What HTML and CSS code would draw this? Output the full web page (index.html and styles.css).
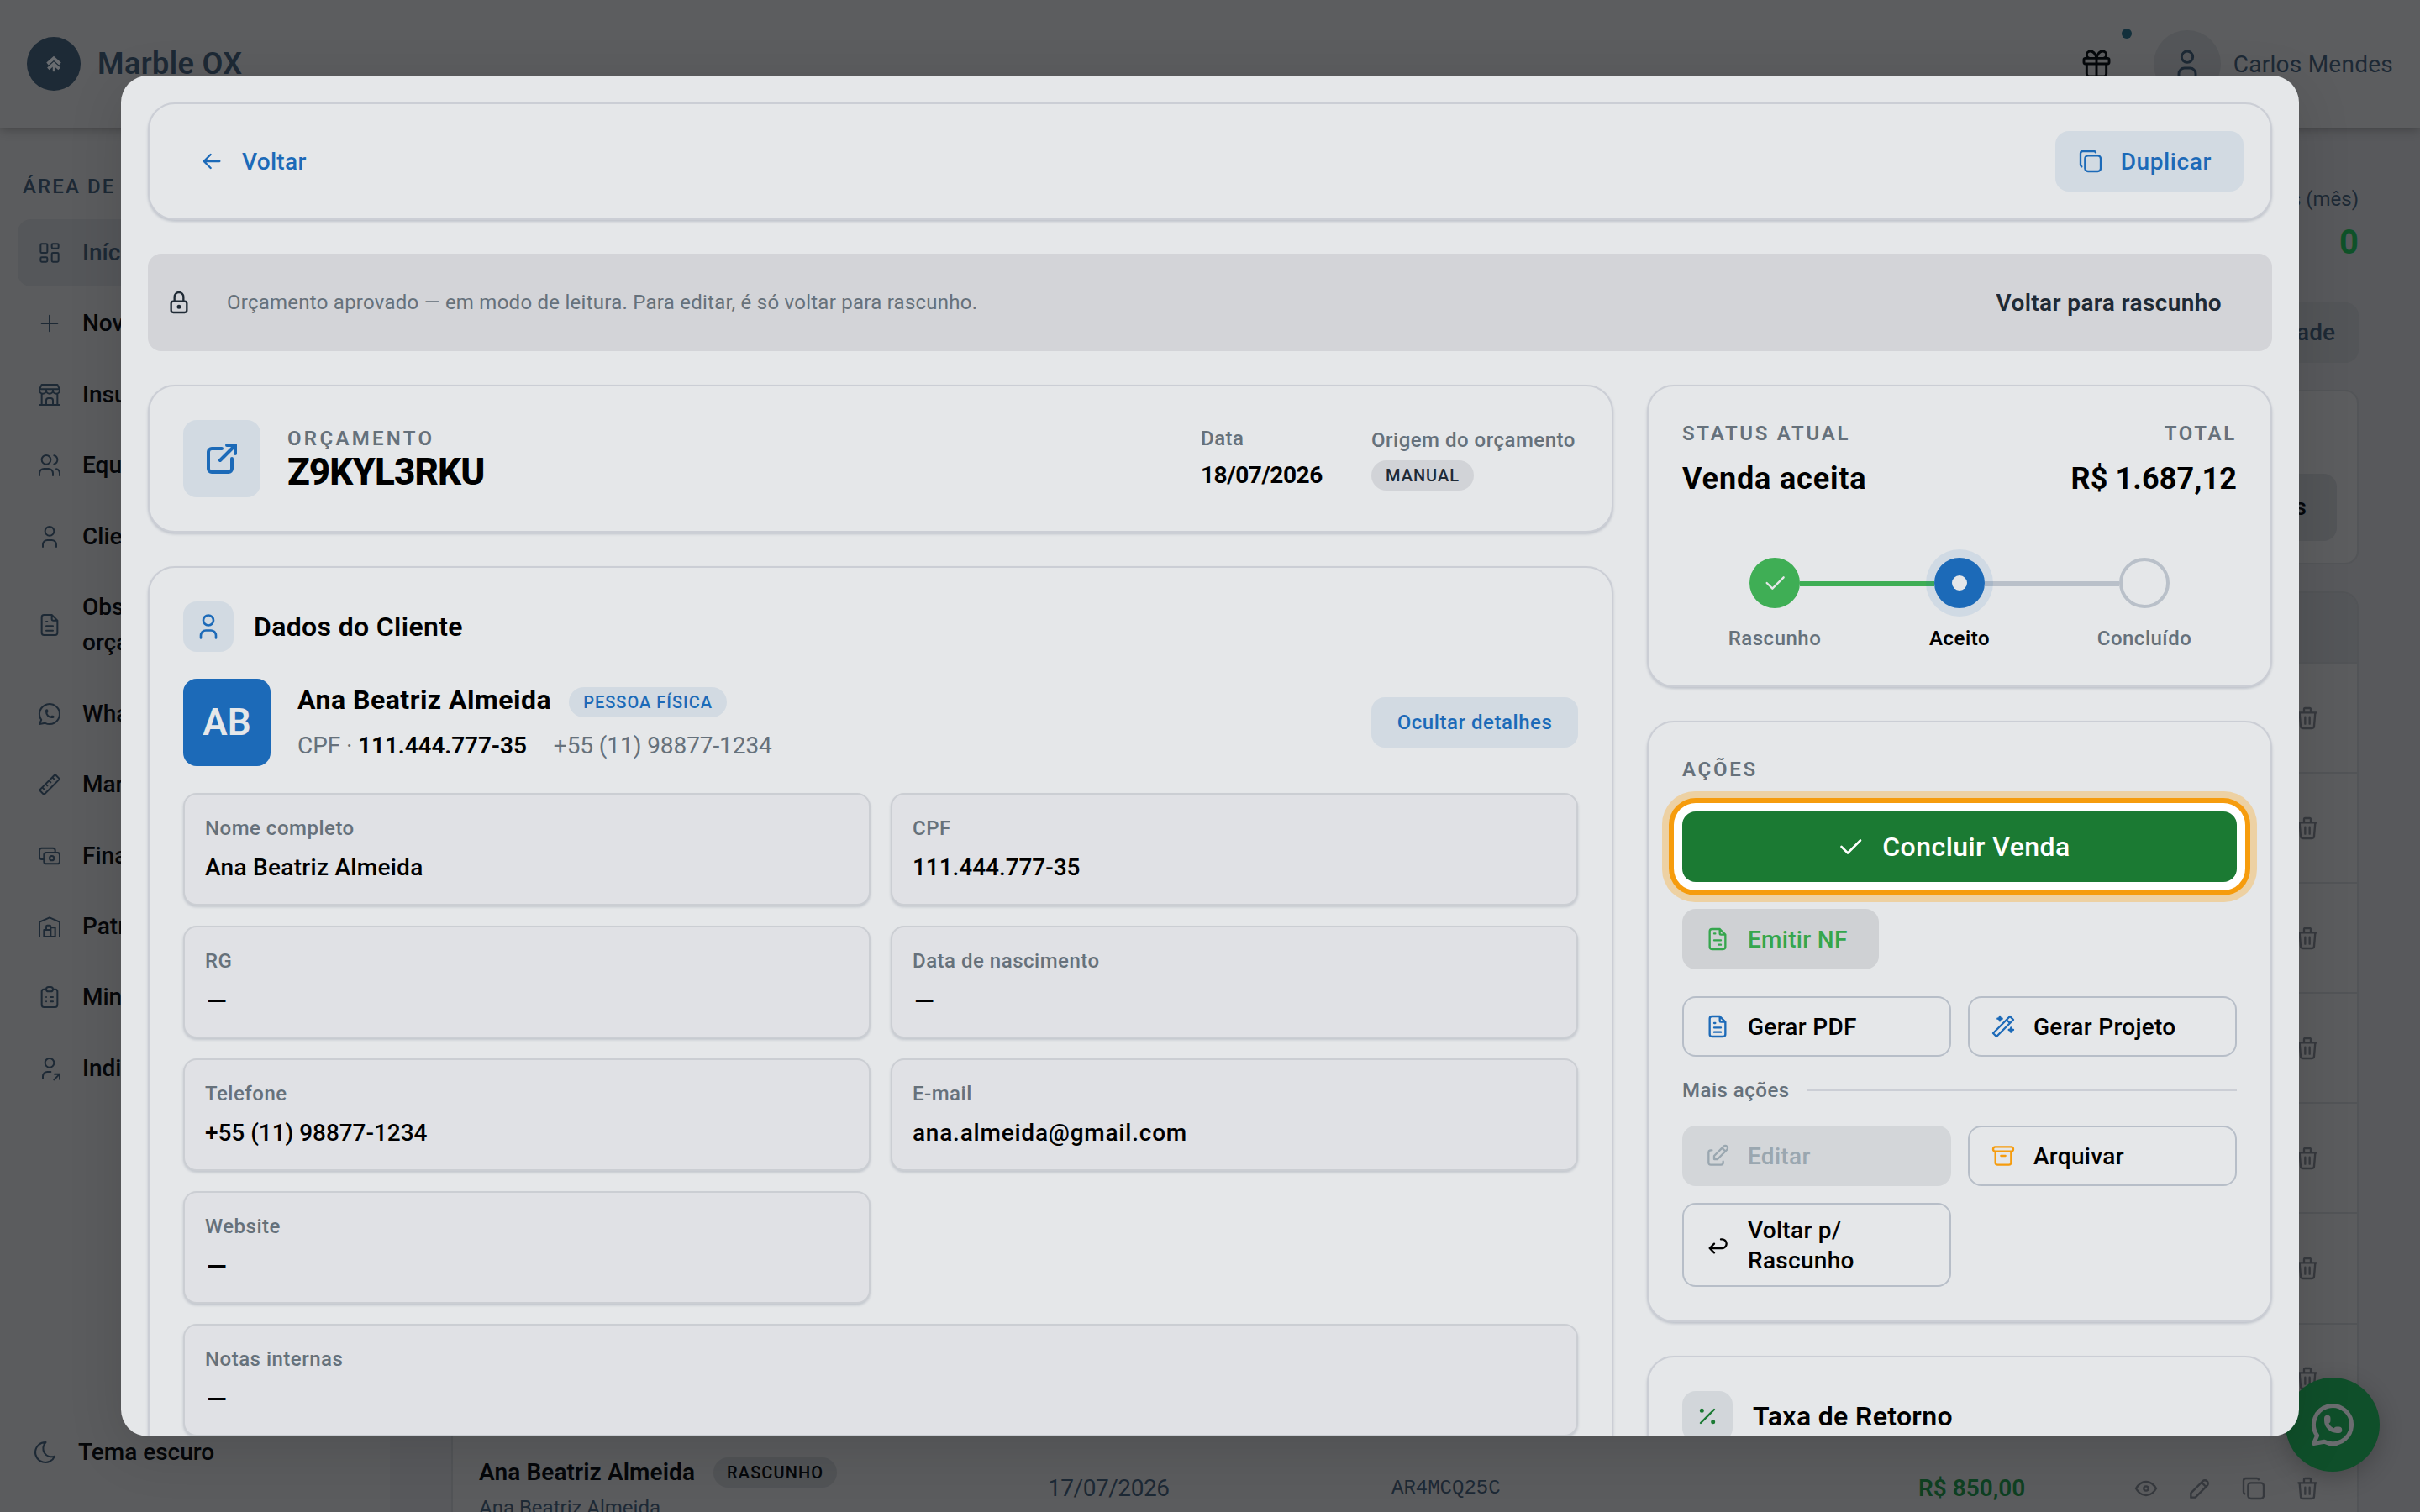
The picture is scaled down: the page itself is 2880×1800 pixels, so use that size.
FILE: index.html
```html
<!DOCTYPE html>
<html lang="pt-BR">
<head>
<meta charset="utf-8">
<title>Marble OX</title>
<link rel="stylesheet" href="styles.css">
</head>
<body>
<svg class="sprite" aria-hidden="true">
  <symbol id="arrow-left" viewBox="0 0 24 24"><path d="M5 12h14M5 12l6 6M5 12l6-6"/></symbol>
  <symbol id="copy" viewBox="0 0 24 24"><path d="M7 9.667A2.667 2.667 0 0 1 9.667 7h8.666A2.667 2.667 0 0 1 21 9.667v8.666A2.667 2.667 0 0 1 18.333 21H9.667A2.667 2.667 0 0 1 7 18.333z"/><path d="M4.012 16.737A2.005 2.005 0 0 1 3 15V5c0-1.1.9-2 2-2h10c.75 0 1.158.385 1.5 1"/></symbol>
  <symbol id="lock" viewBox="0 0 24 24"><path d="M5 13a2 2 0 0 1 2-2h10a2 2 0 0 1 2 2v6a2 2 0 0 1-2 2H7a2 2 0 0 1-2-2zM11 16a1 1 0 1 0 2 0a1 1 0 0 0-2 0M8 11V7a4 4 0 1 1 8 0v4"/></symbol>
  <symbol id="external" viewBox="0 0 24 24"><path d="M12 6H6a2 2 0 0 0-2 2v10a2 2 0 0 0 2 2h10a2 2 0 0 0 2-2v-6M11 13l9-9M15 4h5v5"/></symbol>
  <symbol id="user" viewBox="0 0 24 24"><path d="M8 7a4 4 0 1 0 8 0a4 4 0 0 0-8 0M6 21v-2a4 4 0 0 1 4-4h4a4 4 0 0 1 4 4v2"/></symbol>
  <symbol id="check" viewBox="0 0 24 24"><path d="M5 12l5 5L20 7"/></symbol>
  <symbol id="invoice" viewBox="0 0 24 24"><path d="M14 3v4a1 1 0 0 0 1 1h4M17 21H7a2 2 0 0 1-2-2V5a2 2 0 0 1 2-2h7l5 5v11a2 2 0 0 1-2 2zM9 7h1M9 13h6M13 17h2"/></symbol>
  <symbol id="file" viewBox="0 0 24 24"><path d="M14 3v4a1 1 0 0 0 1 1h4M17 21H7a2 2 0 0 1-2-2V5a2 2 0 0 1 2-2h7l5 5v11a2 2 0 0 1-2 2zM9 9h1M9 13h6M9 17h6"/></symbol>
  <symbol id="wand" viewBox="0 0 24 24"><path d="M6 21L21 6l-3-3L3 18l3 3M15 6l3 3M9 3a2 2 0 0 0 2 2a2 2 0 0 0-2 2a2 2 0 0 0-2-2a2 2 0 0 0 2-2M19 13a2 2 0 0 0 2 2a2 2 0 0 0-2 2a2 2 0 0 0-2-2a2 2 0 0 0 2-2"/></symbol>
  <symbol id="edit" viewBox="0 0 24 24"><path d="M7 7H6a2 2 0 0 0-2 2v9a2 2 0 0 0 2 2h9a2 2 0 0 0 2-2v-1"/><path d="M20.385 6.585a2.1 2.1 0 0 0-2.97-2.97L9 12v3h3zM16 5l3 3"/></symbol>
  <symbol id="archive" viewBox="0 0 24 24"><path d="M3 6a2 2 0 0 1 2-2h14a2 2 0 0 1 0 4H5a2 2 0 0 1-2-2zM5 8v10a2 2 0 0 0 2 2h10a2 2 0 0 0 2-2V8M10 12h4"/></symbol>
  <symbol id="back" viewBox="0 0 24 24"><path d="M9 11l-4 4l4 4m-4-4h11a4 4 0 0 0 0-8h-1"/></symbol>
  <symbol id="percent" viewBox="0 0 24 24"><path d="M16 17a1 1 0 1 0 2 0a1 1 0 0 0-2 0M6 7a1 1 0 1 0 2 0a1 1 0 0 0-2 0M6 18L18 6"/></symbol>
  <symbol id="trash" viewBox="0 0 24 24"><path d="M4 7h16M10 11v6M14 11v6M5 7l1 12a2 2 0 0 0 2 2h8a2 2 0 0 0 2-2l1-12M9 7V4a1 1 0 0 1 1-1h4a1 1 0 0 1 1 1v3"/></symbol>
  <symbol id="eye" viewBox="0 0 24 24"><path d="M10 12a2 2 0 1 0 4 0a2 2 0 0 0-4 0M21 12c-2.4 4-5.4 6-9 6s-6.600-2-9-6c2.400-4 5.400-6 9-6s6.600 2 9 6"/></symbol>
  <symbol id="pencil" viewBox="0 0 24 24"><path d="M4 20h4L18.500 9.500a2.828 2.828 0 1 0-4-4L4 16v4M13.500 6.500l4 4"/></symbol>
  <symbol id="gift" viewBox="0 0 24 24"><path d="M3 9a1 1 0 0 1 1-1h16a1 1 0 0 1 1 1v2a1 1 0 0 1-1 1H4a1 1 0 0 1-1-1zM12 8v13M19 12v7a2 2 0 0 1-2 2H7a2 2 0 0 1-2-2v-7M7.500 8a2.500 2.500 0 0 1 0-5A4.800 8 0 0 1 12 8a4.800 8 0 0 1 4.500-5a2.500 2.500 0 0 1 0 5"/></symbol>
  <symbol id="dashboard" viewBox="0 0 24 24"><path d="M5 4h4a1 1 0 0 1 1 1v6a1 1 0 0 1-1 1H5a1 1 0 0 1-1-1V5a1 1 0 0 1 1-1M5 16h4a1 1 0 0 1 1 1v2a1 1 0 0 1-1 1H5a1 1 0 0 1-1-1v-2a1 1 0 0 1 1-1M15 12h4a1 1 0 0 1 1 1v6a1 1 0 0 1-1 1h-4a1 1 0 0 1-1-1v-6a1 1 0 0 1 1-1M15 4h4a1 1 0 0 1 1 1v2a1 1 0 0 1-1 1h-4a1 1 0 0 1-1-1V5a1 1 0 0 1 1-1"/></symbol>
  <symbol id="plus" viewBox="0 0 24 24"><path d="M12 5v14M5 12h14"/></symbol>
  <symbol id="store" viewBox="0 0 24 24"><path d="M3 21h18M3 7v1a3 3 0 0 0 6 0V7m0 1a3 3 0 0 0 6 0V7m0 1a3 3 0 0 0 6 0V7H3l2-4h14l2 4M5 21V10.850M19 21V10.850M9 21v-4a2 2 0 0 1 2-2h2a2 2 0 0 1 2 2v4"/></symbol>
  <symbol id="users" viewBox="0 0 24 24"><path d="M5 7a4 4 0 1 0 8 0a4 4 0 1 0-8 0M3 21v-2a4 4 0 0 1 4-4h4a4 4 0 0 1 4 4v2M16 3.130a4 4 0 0 1 0 7.750M21 21v-2a4 4 0 0 0-3-3.850"/></symbol>
  <symbol id="whatsapp" viewBox="0 0 24 24"><path d="M3 21l1.650-3.800a9 9 0 1 1 3.400 2.900L3 21M9 10a.5.5 0 0 0 1 0V9a.5.5 0 0 0-1 0v1a5 5 0 0 0 5 5h1a.5.5 0 0 0 0-1h-1a.5.5 0 0 0 0 1"/></symbol>
  <symbol id="ruler" viewBox="0 0 24 24"><path d="M17 3l4 4L7 21l-4-4zM16 7l-1.500-1.500M13 10l-1.500-1.500M10 13l-1.500-1.500M7 16l-1.500-1.500"/></symbol>
  <symbol id="cash" viewBox="0 0 24 24"><path d="M7 11a2 2 0 0 1 2-2h10a2 2 0 0 1 2 2v6a2 2 0 0 1-2 2H9a2 2 0 0 1-2-2zM12 14a2 2 0 1 0 4 0a2 2 0 1 0-4 0M17 9V7a2 2 0 0 0-2-2H5a2 2 0 0 0-2 2v6a2 2 0 0 0 2 2h2"/></symbol>
  <symbol id="warehouse" viewBox="0 0 24 24"><path d="M3 21V8l9-4l9 4v13M13 13h4v8H7v-6h6M13 21v-9a1 1 0 0 0-1-1h-2a1 1 0 0 0-1 1v3"/></symbol>
  <symbol id="clipboard" viewBox="0 0 24 24"><path d="M9 5H7a2 2 0 0 0-2 2v12a2 2 0 0 0 2 2h10a2 2 0 0 0 2-2V7a2 2 0 0 0-2-2h-2M9 5a2 2 0 0 1 2-2h2a2 2 0 0 1 0 4h-2a2 2 0 0 1-2-2zM9 12h.01M13 12h2M9 16h.01M13 16h2"/></symbol>
  <symbol id="user-share" viewBox="0 0 24 24"><path d="M8 7a4 4 0 1 0 8 0a4 4 0 0 0-8 0M6 21v-2a4 4 0 0 1 4-4h3M16 22l5-5M21 21.500V17h-4.500"/></symbol>
  <symbol id="moon" viewBox="0 0 24 24"><path d="M12 3h.393a7.500 7.500 0 0 0 7.920 12.446A9 9 0 1 1 12 2.992z"/></symbol>
</svg>

<div class="app">
  <header class="topbar">
    <div class="brand">
      <span class="logo"><svg viewBox="0 0 24 24"><path d="M3 12l9-8l9 8M4 19l8-7l8 7" stroke="#6a6d71" stroke-width="4.500"/><path d="M12 13v10" stroke="#6a6d71" stroke-width="3"/></svg></span>
      <span class="brand-name">Marble OX</span>
    </div>
    <div class="top-user">
      <span class="gift"><svg class="icon i40"><use href="#gift"/></svg><i class="dot"></i></span>
      <span class="user-circle"><svg class="icon i40"><use href="#user"/></svg></span>
      <span class="user-name">Carlos Mendes</span>
    </div>
  </header>

  <div class="body">
    <nav class="sidebar">
      <div class="nav-title">ÁREA DE TRABALHO</div>
      <ul class="nav">
        <li class="active"><svg class="icon"><use href="#dashboard"/></svg><span>Início</span></li>
        <li><svg class="icon"><use href="#plus"/></svg><span>Novo orçamento</span></li>
        <li><svg class="icon"><use href="#store"/></svg><span>Insumos</span></li>
        <li><svg class="icon"><use href="#users"/></svg><span>Equipe</span></li>
        <li><svg class="icon"><use href="#user"/></svg><span>Clientes</span></li>
        <li><svg class="icon"><use href="#file"/></svg><span>Observações do<br>orçamento</span></li>
        <li><svg class="icon"><use href="#whatsapp"/></svg><span>WhatsApp</span></li>
        <li><svg class="icon"><use href="#ruler"/></svg><span>Marcações</span></li>
        <li><svg class="icon"><use href="#cash"/></svg><span>Financeiro</span></li>
        <li><svg class="icon"><use href="#warehouse"/></svg><span>Patrimônio</span></li>
        <li><svg class="icon"><use href="#clipboard"/></svg><span>Minutas</span></li>
        <li><svg class="icon"><use href="#user-share"/></svg><span>Indicações</span></li>
      </ul>
      <div class="theme"><svg class="icon"><use href="#moon"/></svg><span>Tema escuro</span></div>
    </nav>

    <main class="main">
      <section class="stat"><div class="stat-label">Vendas (mês)</div><div class="stat-value">0</div></section>
      <div class="toolbar"><span class="ghost-btn">Produtividade</span></div>
      <section class="filters"><span class="ghost-btn tall">Filtros</span></section>
      <section class="table">
        <div class="thead"></div>
        <div class="row"><svg class="icon"><use href="#trash"/></svg></div>
        <div class="row"><svg class="icon"><use href="#trash"/></svg></div>
        <div class="row"><svg class="icon"><use href="#trash"/></svg></div>
        <div class="row"><svg class="icon"><use href="#trash"/></svg></div>
        <div class="row"><svg class="icon"><use href="#trash"/></svg></div>
        <div class="row"><svg class="icon"><use href="#trash"/></svg></div>
        <div class="row"><svg class="icon"><use href="#trash"/></svg></div>
        <div class="row">
          <div class="cell-name">
            <div class="line1"><b>Ana Beatriz Almeida</b><span class="tag">RASCUNHO</span></div>
            <div class="line2">Ana Beatriz Almeida</div>
          </div>
          <div class="cell-date">17/07/2026</div>
          <div class="cell-code">AR4MCQ25C</div>
          <div class="cell-value">R$ 850,00</div>
          <div class="cell-actions">
            <svg class="icon"><use href="#eye"/></svg><svg class="icon"><use href="#pencil"/></svg><svg class="icon"><use href="#copy"/></svg><svg class="icon"><use href="#trash"/></svg>
          </div>
        </div>
      </section>
    </main>
  </div>
</div>

<div class="fab"><svg class="icon"><use href="#whatsapp"/></svg></div>

<div class="modal">
  <header class="card modal-head">
    <button class="btn link"><svg class="icon"><use href="#arrow-left"/></svg>Voltar</button>
    <button class="btn tint"><svg class="icon"><use href="#copy"/></svg>Duplicar</button>
  </header>

  <div class="banner">
    <svg class="icon"><use href="#lock"/></svg>
    <p>Orçamento aprovado — em modo de leitura. Para editar, é só voltar para rascunho.</p>
    <button>Voltar para rascunho</button>
  </div>

  <div class="columns">
    <div class="col">
      <section class="card quote">
        <span class="quote-icon"><svg class="icon"><use href="#external"/></svg></span>
        <div class="quote-id">
          <div class="eyebrow wide-caps">ORÇAMENTO</div>
          <div class="code">Z9KYL3RKU</div>
        </div>
        <div class="quote-date"><div class="label">Data</div><div class="date">18/07/2026</div></div>
        <div class="quote-origin"><div class="label">Origem do orçamento</div><span class="pill gray">MANUAL</span></div>
      </section>

      <section class="card client">
        <div class="card-title"><span class="title-icon blue"><svg class="icon i36"><use href="#user"/></svg></span><h2>Dados do Cliente</h2></div>
        <div class="person">
          <span class="avatar">AB</span>
          <div class="person-info">
            <div class="person-name"><strong>Ana Beatriz Almeida</strong><span class="pill blue">PESSOA FÍSICA</span></div>
            <div class="person-meta"><span>CPF · <b>111.444.777-35</b></span><span>+55 (11) 98877-1234</span></div>
          </div>
          <button class="btn-small">Ocultar detalhes</button>
        </div>
        <div class="fields">
          <div class="field"><div class="label">Nome completo</div><div class="val">Ana Beatriz Almeida</div></div>
          <div class="field"><div class="label">CPF</div><div class="val num">111.444.777-35</div></div>
          <div class="field"><div class="label">RG</div><div class="val dash">—</div></div>
          <div class="field"><div class="label">Data de nascimento</div><div class="val dash">—</div></div>
          <div class="field"><div class="label">Telefone</div><div class="val num">+55 (11) 98877-1234</div></div>
          <div class="field"><div class="label">E-mail</div><div class="val email">ana.almeida@gmail.com</div></div>
          <div class="field"><div class="label">Website</div><div class="val dash">—</div></div>
          <div class="field wide"><div class="label">Notas internas</div><div class="val dash">—</div></div>
        </div>
      </section>
    </div>

    <aside class="col">
      <section class="card status">
        <div class="pair eyebrow"><span>STATUS ATUAL</span><span>TOTAL</span></div>
        <div class="pair big"><span class="state">Venda aceita</span><span class="total">R$ 1.687,12</span></div>
        <ol class="steps">
          <li class="done"><span class="bullet"><svg class="icon"><use href="#check"/></svg></span><span>Rascunho</span></li>
          <li class="current"><span class="bullet"></span><span>Aceito</span></li>
          <li class="todo"><span class="bullet"></span><span>Concluído</span></li>
        </ol>
      </section>

      <section class="card actions">
        <div class="eyebrow">AÇÕES</div>
        <button class="primary"><svg class="icon i36"><use href="#check"/></svg><span>Concluir Venda</span></button>
        <button class="btn invoice"><svg class="icon"><use href="#invoice"/></svg>Emitir NF</button>
        <div class="grid2">
          <button class="btn outline"><svg class="icon c-blue"><use href="#file"/></svg>Gerar PDF</button>
          <button class="btn outline"><svg class="icon c-blue"><use href="#wand"/></svg>Gerar Projeto</button>
        </div>
        <div class="divider"><span class="label">Mais ações</span></div>
        <div class="grid2">
          <button class="btn disabled"><svg class="icon"><use href="#edit"/></svg>Editar</button>
          <button class="btn outline"><svg class="icon c-orange"><use href="#archive"/></svg>Arquivar</button>
          <button class="btn outline two-line"><svg class="icon"><use href="#back"/></svg><span>Voltar p/<br>Rascunho</span></button>
        </div>
      </section>

      <section class="card rate">
        <div class="card-title"><span class="title-icon gray"><svg class="icon"><use href="#percent"/></svg></span><h2>Taxa de Retorno</h2></div>
      </section>
    </aside>
  </div>
</div>
</body>
</html>
```
FILE: styles.css
```css
* { box-sizing: border-box; margin: 0; padding: 0; }
html, body { width: 2880px; height: 1800px; overflow: hidden; }
body {
  position: relative;
  font-family: Roboto, "Liberation Sans", sans-serif;
  font-size: 28px;
  line-height: 42px;
  color: #000;
  background: #5a5b5d;
}
button { font: inherit; color: inherit; border: 0; background: none; letter-spacing: inherit; }
ul, ol { list-style: none; }
.sprite { position: absolute; width: 0; height: 0; }
.icon {
  width: 32px; height: 32px; flex: none; display: block;
  fill: none; stroke: currentColor; stroke-width: 1.75;
  stroke-linecap: round; stroke-linejoin: round;
}
.i36 { width: 36px; height: 36px; }
.i40 { width: 40px; height: 40px; }

/* Dimmed application behind the dialog */
.app { height: 1800px; display: flex; flex-direction: column; }
.topbar {
  position: relative;
  height: 152px; flex: none; padding: 0 32px; background: #5c5d5f;
  display: flex; justify-content: space-between; align-items: center;
  color: #1d2935; box-shadow: 0 2px 12px rgba(0, 0, 0, .28);
}
.brand, .top-user { display: flex; align-items: center; }
.brand { gap: 20px; }
.logo { width: 64px; height: 64px; border-radius: 50%; background: #1d2a36; display: grid; place-items: center; }
.logo svg { width: 20px; height: 20px; fill: none; }
.brand-name { font-size: 36px; font-weight: 600; letter-spacing: .4px; }
.gift { position: relative; color: #05080b; margin-right: 48px; }
.dot { position: absolute; right: -22px; top: -22px; width: 12px; height: 12px; border-radius: 50%; background: #13303c; }
.user-circle { width: 80px; height: 80px; border-radius: 50%; background: #545659; display: grid; place-items: center; margin-right: 15px; }
.user-name { letter-spacing: .25px; padding-top: 1px; }
.body { flex: 1; display: flex; min-height: 0; }
.sidebar { width: 464px; flex: none; padding: 49px 21px 0; display: flex; flex-direction: column; background: #5b5c5e; }
.nav-title { font-size: 24px; font-weight: 500; letter-spacing: 2.1px; color: #1d2935; padding-left: 6px; height: 60px; }
.nav { display: flex; flex-direction: column; gap: 4.45px; }
.nav li { display: flex; align-items: center; gap: 23px; padding: 19px 22px; border-radius: 16px; white-space: nowrap; font-weight: 500; color: #05070a; }
.nav .icon, .theme .icon { color: #1d2935; stroke-width: 1.5; }
.nav .active { background: #55575a; color: #1d2935; }
.theme { margin-top: auto; margin-bottom: 50px; display: flex; gap: 23px; align-items: center; padding-left: 17px; font-weight: 500; color: #05070a; }
.main { flex: 1; padding: 64px 73px 0; background: #58595c; display: flex; flex-direction: column; color: #1d2935; }
.stat { text-align: right; height: 144px; font-size: 24px; }
.stat-value { font-size: 40px; font-weight: 700; color: #0f5229; line-height: 56px; margin-top: 3px; }
.ghost-btn { background: #535558; border-radius: 16px; height: 72px; padding: 0 28px; display: flex; align-items: center; font-weight: 500; }
.toolbar { display: flex; justify-content: flex-end; height: 104px; }
.filters { border: 2px solid #535558; border-radius: 16px; height: 208px; background: #5c5d5f; display: flex; justify-content: flex-end; align-items: flex-end; padding: 26px 24px; margin-bottom: 32px; }
.ghost-btn.tall { height: 80px; padding: 0 36px; color: #05070a; }
.table { border: 2px solid #525457; border-bottom: 0; border-radius: 20px 20px 0 0; background: #5b5c5e; flex: 1; overflow: hidden; }
.thead { height: 84px; background: #545659; border-bottom: 2px solid #525457; }
.row { height: 131.100px; border-bottom: 2px solid #525457; display: flex; justify-content: flex-end; align-items: center; padding: 0 43px 0 31px; color: #36393e; }
.cell-name { width: 677px; color: #05070a; }
.line1 { display: flex; align-items: center; gap: 22px; font-weight: 500; }
.line1 b { font-weight: 600; letter-spacing: .1px; }
.line2 { font-size: 24px; color: #1d2935; line-height: 36px; padding-top: 3px; }
.tag { font-size: 20px; line-height: 36px; background: #515356; border-radius: 18px; padding: 0 16px; letter-spacing: 1.1px; }
.cell-date { width: 409px; color: #1d2935; letter-spacing: -.45px; }
.cell-code { width: 627px; color: #1d2935; font-family: "Liberation Mono", "DejaVu Sans Mono", monospace; font-size: 24px; }
.cell-value { flex: 1; color: #0f4022; font-weight: 600; }
.cell-actions { display: flex; gap: 32px; }
.fab {
  position: absolute; left: 2720px; top: 1640px; width: 112px; height: 112px; border-radius: 50%;
  background: #0f4f2a; color: #6b6d70; display: grid; place-items: center; box-shadow: 0 8px 28px rgba(0, 0, 0, .22);
}
.fab .icon { width: 60px; height: 60px; stroke-width: 2; }

/* Dialog */
.modal {
  position: absolute; left: 144px; top: 90px; width: 2592px; height: 1620px;
  padding: 32px; border-radius: 32px; background: #e5e7e9; overflow: hidden;
  display: flex; flex-direction: column; gap: 40px;
  box-shadow: 0 16px 64px rgba(0, 0, 0, .13);
}
.card { border: 2px solid #cbced5; border-radius: 32px; padding: 40px; background: #e5e7e9; box-shadow: 0 2px 3px rgba(60, 75, 100, .22); flex: none; }
.modal-head { padding: 32px; display: flex; justify-content: space-between; }
.btn { height: 72px; border-radius: 16px; padding: 1px 38px 0 26px; display: flex; align-items: center; gap: 20px; font-weight: 500; text-align: left; line-height: 36px; letter-spacing: .3px; }
.btn .icon { margin-top: -1px; }
.link { color: #1c6ab8; }
.tint { color: #1c6ab8; background: #d2dae2; letter-spacing: .6px; }
.banner { height: 116px; flex: none; border-radius: 16px; background: #d3d4d8; display: flex; align-items: center; padding: 0 60px 0 21px; color: #1f2a35; }
.banner p { flex: 1; margin-left: 41px; font-size: 24px; letter-spacing: .25px; color: #66717b; }
.banner button { font-weight: 600; letter-spacing: .38px; padding-top: 1px; }
.columns { display: grid; grid-template-columns: 1744px 744px; gap: 40px; }
.col { display: flex; flex-direction: column; gap: 40px; }
.eyebrow { font-size: 24px; line-height: 32px; font-weight: 600; letter-spacing: 2.7px; color: #66717b; }
.wide-caps { letter-spacing: 3.3px; }
.label { font-size: 24px; line-height: 32px; font-weight: 500; letter-spacing: .5px; color: #66717b; }
.quote { display: flex; align-items: center; }
.quote-icon { width: 92px; height: 92px; border-radius: 16px; background: #d2dae2; color: #1c6ab8; display: grid; place-items: center; margin-right: 32px; }
.quote-icon .icon { width: 48px; height: 48px; stroke-width: 2; }
.quote-id { flex: 1; }
.code { font-size: 44px; line-height: 48px; font-weight: 800; letter-spacing: -.9px; }
.quote-date { width: 203px; }
.date { font-weight: 700; margin-top: 7px; letter-spacing: -.45px; }
.quote-origin { width: 246px; white-space: nowrap; }
.pill { display: inline-block; height: 36px; line-height: 36px; border-radius: 18px; padding: 0 17px; font-size: 20px; font-weight: 500; letter-spacing: 1px; }
.pill.gray { background: #d1d3d7; color: #1f2a35; }
.quote-origin .pill { display: block; width: fit-content; margin-top: 8px; }
.pill.blue { background: #d2dae2; color: #1c6ab8; margin-top: 6px; }
.card-title { display: flex; align-items: center; gap: 24px; }
.card-title h2 { font-size: 32px; font-weight: 600; letter-spacing: .35px; margin-top: -1px; }
.title-icon { width: 60px; height: 60px; border-radius: 16px; display: grid; place-items: center; }
.title-icon.blue { background: #d2dae2; color: #1c6ab8; }
.title-icon.gray { background: #d2d6da; color: #1b7a33; }
.client { min-height: 1300px; }
.person { display: flex; align-items: center; margin: 32px 0; }
.avatar { width: 104px; height: 104px; border-radius: 16px; background: #1c6ab8; color: #e5e7e9; font-size: 44px; font-weight: 600; display: grid; place-items: center; margin-right: 32px; }
.person-info { flex: 1; }
.person-name { display: flex; align-items: center; height: 42px; gap: 21px; font-size: 32px; padding-top: 1px; }
.person-name strong { font-weight: 700; letter-spacing: .5px; }
.person-meta { display: flex; gap: 32px; margin-top: 14px; color: #66717b; letter-spacing: -.08px; }
.person-meta b { font-weight: 600; color: #000; letter-spacing: -.1px; }
.btn-small { height: 60px; width: 246px; border-radius: 16px; background: #d2dae2; color: #1c6ab8; font-size: 24px; font-weight: 500; letter-spacing: .55px; text-align: center; }
.fields { display: grid; grid-template-columns: 1fr 1fr; gap: 24px; }
.field { height: 134px; border: 2px solid #cbced3; border-radius: 16px; padding: 24px; background: #e0e1e5; box-shadow: 0 2px 3px rgba(60, 75, 100, .2); }
.field.wide { grid-column: span 2; }
.val { margin-top: 10px; font-weight: 500; letter-spacing: .28px; }
.val.num { letter-spacing: -.05px; }
.val.email { letter-spacing: .78px; }
.val.dash { font-size: 31px; padding: 2px 0 0 2px; }
.pair { display: flex; justify-content: space-between; }
.big { font-size: 36px; line-height: 44px; font-weight: 700; margin-top: 16px; }
.state { letter-spacing: .85px; }
.total { letter-spacing: .15px; }
.steps { display: grid; grid-template-columns: repeat(3, 1fr); margin-top: 72px; }
.steps li { display: flex; flex-direction: column; align-items: center; gap: 20px; font-size: 24px; line-height: 32px; font-weight: 500; letter-spacing: .5px; color: #66717b; position: relative; }
.steps li::before { content: ""; position: absolute; top: 28px; left: 140px; width: 160px; height: 6px; background: #b9c0c9; }
.steps .done::before { background: #3fae55; }
.steps .todo::before { display: none; }
.bullet { width: 60px; height: 60px; border-radius: 50%; display: grid; place-items: center; position: relative; }
.done .bullet { background: #3fae55; color: #e5e7e9; }
.current .bullet { background: #1c6ab8; box-shadow: 0 0 0 10px rgba(28, 106, 184, .1); }
.current .bullet::after { content: ""; width: 18px; height: 18px; border-radius: 50%; background: #e5e7e9; }
.steps .current { color: #000; font-weight: 600; }
.todo .bullet { border: 4px solid #b9c0c9; }
.primary {
  width: 100%; height: 84px; margin: 34px 0 32px; border-radius: 16px; background: #1b7a33; color: #fff;
  display: flex; align-items: center; justify-content: center; gap: 20px; padding-right: 16px; font-size: 32px; font-weight: 500; letter-spacing: .45px;
  box-shadow: 0 0 0 10px #fff, 0 0 0 16px #f69c0d, 0 0 0 24px #edd1a3;
}
.primary span { margin-top: -1px; }
.invoice { background: #cfd1d4; color: #35a64d; margin-bottom: 32px; padding-right: 37px; }
.grid2 { display: grid; grid-template-columns: 1fr 1fr; gap: 20px; }
.outline { border: 2px solid #b7bec8; padding-left: 24px; }
.c-blue { color: #1c6ab8; }
.c-orange { color: #f69c0d; }
.disabled { background: #d3d6d9; color: #9aa7b0; }
.two-line { height: 100px; }
.divider { display: flex; align-items: center; gap: 20px; margin: 24px 0 26px; }
.divider::after { content: ""; flex: 1; height: 2px; background: #cbced5; }
```
